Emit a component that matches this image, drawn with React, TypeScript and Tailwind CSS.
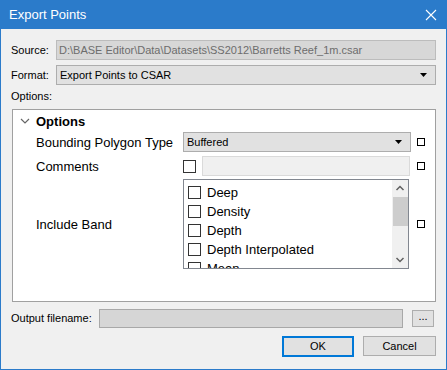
import React from "react";

const font = { fontFamily: "'Liberation Sans', Arial, sans-serif" };

function SmallBox() {
  return <div className="w-[8px] h-[8px] border border-black bg-white shrink-0" />;
}

function Check() {
  return <div className="w-[13px] h-[13px] border border-[#333] bg-white shrink-0" />;
}

const bands = ["Deep", "Density", "Depth", "Depth Interpolated", "Mean"];

export default function App() {
  return (
    <div className="w-[447px] h-[370px] bg-[#f0f0f0] flex flex-col text-[11px] text-black leading-none whitespace-nowrap" style={font}>
      <div className="h-[29px] bg-[#2b7bca] flex items-center justify-between pl-[9px] pr-[10px] shrink-0">
        <span className="text-white text-[13px]">Export Points</span>
        <svg width="12" height="12" viewBox="0 0 12 12">
          <path d="M1 1 L11 11 M11 1 L1 11" stroke="white" strokeWidth="1.1" />
        </svg>
      </div>
      <div className="flex-1 border-x border-b border-[#2b7bca] flex flex-col pl-[10px] pr-[10px]">
        <div className="flex items-center mt-[11px] h-[20px]">
          <span className="w-[45px]">Source:</span>
          <div className="flex-1 h-[20px] border border-[#bcbcbc] bg-[#d7d7d7] flex items-center pl-[2px] text-[#6d6d6d] overflow-hidden">
            D:\BASE Editor\Data\Datasets\SS2012\Barretts Reef_1m.csar
          </div>
        </div>
        <div className="flex items-center mt-[5px] h-[20px]">
          <span className="w-[45px]">Format:</span>
          <div className="flex-1 h-[20px] border border-[#adadad] bg-[#e1e1e1] flex items-center justify-between pl-[3px] pr-[8px]">
            <span>Export Points to CSAR</span>
            <svg width="7" height="4" viewBox="0 0 7 4"><path d="M0 0 H7 L3.5 4 Z" fill="#000" /></svg>
          </div>
        </div>
        <div className="mt-[6px] h-[14px]">Options:</div>
        <div className="mt-[4px] ml-[1px] h-[193px] border border-[#a0a0a0] bg-white flex flex-col text-[13px]">
          <div className="flex items-center h-[20px] mt-[1px]">
            <svg width="10" height="6" viewBox="0 0 10 6" className="ml-[7px]">
              <path d="M1 1 L5 5 L9 1" stroke="#666" strokeWidth="1.2" fill="none" />
            </svg>
            <span className="ml-[6px] font-bold">Options</span>
          </div>
          <div className="flex items-center h-[20px] mt-[1px] pl-[23px]">
            <span className="w-[147px]">Bounding Polygon Type</span>
            <div className="w-[228px] h-[20px] border border-[#adadad] bg-[#e1e1e1] flex items-center justify-between pl-[3px] pr-[8px] text-[11px]">
              <span>Buffered</span>
              <svg width="7" height="4" viewBox="0 0 7 4"><path d="M0 0 H7 L3.5 4 Z" fill="#000" /></svg>
            </div>
            <div className="ml-[6px]"><SmallBox /></div>
          </div>
          <div className="flex items-center h-[20px] mt-[4px] pl-[23px]">
            <span className="w-[147px]">Comments</span>
            <Check />
            <div className="ml-[6px] w-[208px] h-[20px] border border-[#dadada] bg-[#f0f0f0]" />
            <div className="ml-[7px]"><SmallBox /></div>
          </div>
          <div className="flex items-center mt-[3px] pl-[23px]">
            <span className="w-[147px]">Include Band</span>
            <div className="w-[226px] h-[90px] border border-[#828790] bg-white flex overflow-hidden">
              <div className="flex-1 flex flex-col pt-[3px] pl-[4px]">
                {bands.map((b) => (
                  <div key={b} className="flex items-center h-[19px] shrink-0">
                    <Check />
                    <span className="ml-[6px]">{b}</span>
                  </div>
                ))}
              </div>
              <div className="w-[16px] bg-[#f0f0f0] flex flex-col items-center shrink-0">
                <svg width="16" height="17" viewBox="0 0 16 17"><path d="M4.5 10 L8 6.5 L11.5 10" stroke="#606060" strokeWidth="1.5" fill="none" /></svg>
                <div className="w-[15px] h-[29px] bg-[#cdcdcd]" />
                <div className="flex-1" />
                <svg width="16" height="17" viewBox="0 0 16 17"><path d="M4.5 7 L8 10.5 L11.5 7" stroke="#606060" strokeWidth="1.5" fill="none" /></svg>
              </div>
            </div>
            <div className="ml-[8px]"><SmallBox /></div>
          </div>
        </div>
        <div className="flex items-center mt-[7px] h-[19px]">
          <span className="w-[88px]">Output filename:</span>
          <div className="w-[304px] h-[19px] border border-[#a8a8a8] bg-[#d6d6d6]" />
          <div className="ml-[9px] w-[22px] h-[17px] border border-[#adadad] bg-[#e1e1e1] flex items-center justify-center pb-[4px]">...</div>
        </div>
        <div className="flex justify-end mt-[8px]">
          <div className="w-[72px] h-[21px] border-2 border-[#0078d7] bg-[#e1e1e1] flex items-center justify-center">OK</div>
          <div className="ml-[9px] w-[73px] h-[20px] border border-[#adadad] bg-[#e1e1e1] flex items-center justify-center">Cancel</div>
        </div>
      </div>
    </div>
  );
}
